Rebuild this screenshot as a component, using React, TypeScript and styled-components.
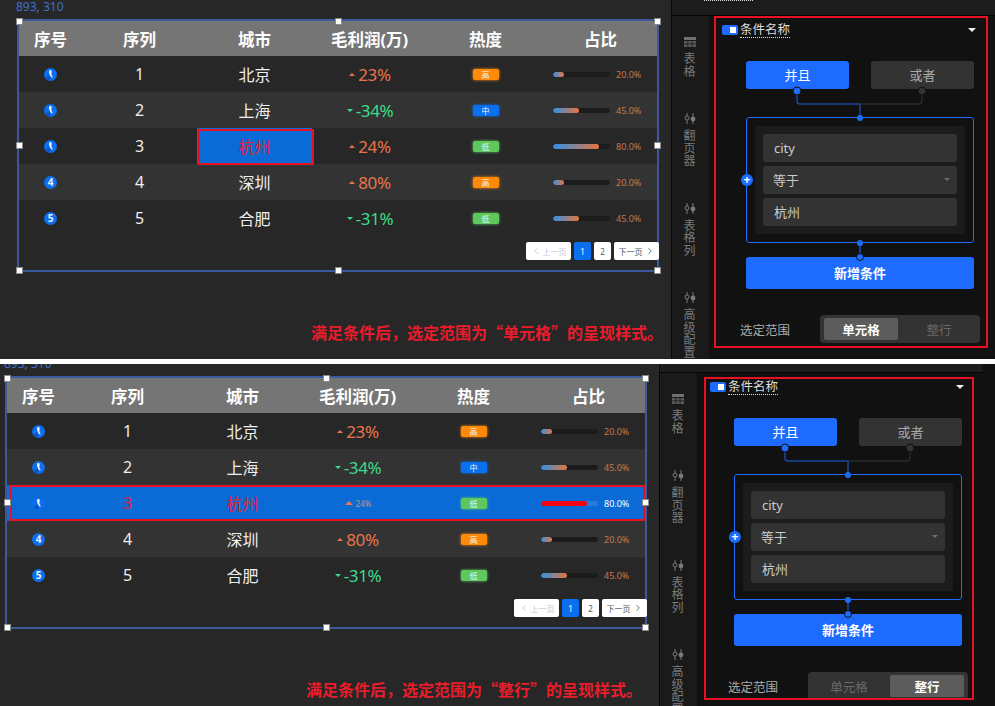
import React from "react";
import styled, { createGlobalStyle } from "styled-components";
import { ChevronLeft, ChevronRight } from "lucide-react";

const GlobalStyle = createGlobalStyle`
  html, body {
    margin: 0;
    padding: 0;
    background: #fff;
  }
  body {
    font-family: "Noto Sans", "Noto Sans CJK SC", sans-serif;
  }
`;

const Page = styled.div`
  width: 995px;
  height: 706px;
  overflow: hidden;
  display: flex;
  flex-direction: column;
  gap: 5px;
`;

const Shot = styled.section<{ $height: number }>`
  height: ${(p) => p.$height}px;
  overflow: hidden;
  background: #111;
  flex: none;
`;

const Stage = styled.div<{ $dx: number; $dy: number }>`
  display: flex;
  width: 995px;
  height: 365px;
  margin-left: ${(p) => p.$dx}px;
  margin-top: ${(p) => p.$dy}px;
`;

const Canvas = styled.div<{ $captionRight: number }>`
  width: 671px;
  flex: none;
  box-sizing: border-box;
  background: #272727;
  padding: 19px ${(p) => p.$captionRight}px 0 17px;
  display: flex;
  flex-direction: column;
`;

const Frame = styled.div`
  position: relative;
  box-sizing: border-box;
  width: 642px;
  height: 253px;
  border: 2px solid #3b5a9e;
`;

const SizeLabel = styled.div`
  position: absolute;
  left: -3px;
  top: -22px;
  font-size: 12px;
  line-height: 16px;
  color: #3f6fcf;
`;

const Handle = styled.i<{ $x: number; $y: number }>`
  position: absolute;
  z-index: 3;
  left: ${(p) => p.$x}%;
  top: ${(p) => p.$y}%;
  width: 5px;
  height: 5px;
  margin: -3.5px 0 0 -3.5px;
  background: #fff;
  border: 1px solid #8a8a8a;
`;

const Grid = styled.div`
  display: grid;
  grid-template-columns: 63px 115px 115px 115px 117px 113px;
  align-items: stretch;
`;

const HeadRow = styled(Grid)`
  height: 35px;
  background: #757575;
`;

const HeadCell = styled.div`
  display: flex;
  align-items: center;
  justify-content: center;
  color: #fff;
  font-size: 16.5px;
  font-weight: 700;
`;

const Row = styled(Grid)<{ $even: boolean; $picked: boolean; $lift: boolean }>`
  position: relative;
  ${(p) => p.$lift && "z-index: 2;"}
  height: 36px;
  background: ${(p) => (p.$picked ? "#0a6bd6" : p.$even ? "#333333" : "#272727")};
  ${(p) =>
    p.$picked &&
    `
    &::after {
      content: "";
      position: absolute;
      inset: 0 0 0 3px;
      border: 2px solid #e81123;
      pointer-events: none;
    }
  `}
`;

const Cell = styled.div<{ $picked?: boolean; $red?: boolean }>`
  position: relative;
  display: flex;
  align-items: center;
  justify-content: center;
  font-size: 16px;
  color: ${(p) => (p.$red ? "#e3203a" : "#eeeeee")};
  ${(p) => p.$picked && "background: #0a6bd6;"}
  ${(p) =>
    p.$picked &&
    `
    &::after {
      content: "";
      position: absolute;
      inset: 1px -2px -1px 1px;
      border: 2px solid #e81123;
    }
  `}
`;

const RankBadge = styled.span`
  position: relative;
  width: 13px;
  height: 13px;
  border-radius: 50%;
  background: #0c6ff0;
  color: #e6f0ff;
  font-size: 10px;
  font-weight: 700;
  line-height: 13px;
  text-align: center;
  display: block;
`;

const Trend = styled.div<{ $tone: "up" | "down" }>`
  display: flex;
  align-items: center;
  justify-content: center;
  gap: 3px;
  padding-left: 1px;
  font-size: 17px;
  letter-spacing: -0.4px;
  color: ${(p) => (p.$tone === "up" ? "#e8754c" : "#3ddc8a")};
`;

const TinyTrend = styled(Trend)`
  font-size: 8px;
  letter-spacing: 0;
  color: #d98a78;
`;

const Tri = styled.i<{ $down: boolean; $size: number }>`
  width: 0;
  height: 0;
  border-left: ${(p) => p.$size}px solid transparent;
  border-right: ${(p) => p.$size}px solid transparent;
  ${(p) =>
    p.$down
      ? `border-top: ${p.$size}px solid #3ddc8a;`
      : `border-bottom: ${p.$size}px solid #e8754c;`}
`;

const levelColors = {
  高: "#ff8a0a",
  中: "#0a70f0",
  低: "#5ec85e",
};

const Level = styled.span<{ $level: keyof typeof levelColors }>`
  width: 26px;
  height: 11px;
  border-radius: 2px;
  background: ${(p) => levelColors[p.$level]};
  box-shadow: 0 0 3px ${(p) => levelColors[p.$level]};
  color: #f4f4f4;
  font-size: 8px;
  line-height: 11px;
  text-align: center;
`;

const Ratio = styled.div`
  display: flex;
  align-items: center;
  padding-left: 9px;
  gap: 6px;
`;

const Track = styled.div<{ $picked: boolean }>`
  width: 57px;
  height: 5px;
  border-radius: 3px;
  background: ${(p) => (p.$picked ? "#2a78d8" : "#1b1b1b")};
  overflow: hidden;
`;

const Fill = styled.div<{ $picked: boolean }>`
  height: 100%;
  border-radius: 3px;
  background: ${(p) => (p.$picked ? "#f5000f" : "linear-gradient(90deg, #2f90ea, #e8743c)")};
`;

const RatioText = styled.span<{ $picked: boolean }>`
  font-size: 9px;
  color: ${(p) => (p.$picked ? "#ffffff" : "#c8794a")};
`;

const Pager = styled.div`
  display: flex;
  justify-content: flex-end;
  gap: 3px;
  margin: 6px -2px 0 0;
`;

const PageButton = styled.div<{ $active?: boolean; $muted?: boolean; $wide?: boolean }>`
  width: ${(p) => (p.$wide ? 45 : 17)}px;
  height: 18px;
  display: flex;
  align-items: center;
  justify-content: center;
  gap: 2px;
  border-radius: 2px;
  font-size: 8px;
  background: ${(p) => (p.$active ? "#0a70f0" : "#fff")};
  color: ${(p) => (p.$active ? "#fff" : p.$muted ? "#c4c8d0" : "#555")};
`;

const Caption = styled.div`
  margin-top: 49px;
  align-self: flex-end;
  font-family: "Noto Sans CJK SC", sans-serif;
  font-size: 16px;
  line-height: 22px;
  font-weight: 700;
  white-space: nowrap;
  color: #ea1c2b;
`;

const Side = styled.div`
  width: 324px;
  flex: none;
  box-sizing: border-box;
  border-left: 1px solid #080808;
  display: flex;
  flex-direction: column;
  background: #1a1a1a;
`;

const TopBar = styled.div`
  height: 15px;
  flex: none;
  border-bottom: 1px solid #050505;
  background: #1c1c1c;
`;

const Trace = styled.div`
  width: 49px;
  margin-left: 32px;
  border-top: 1px dotted #ddd;
`;

const SideBody = styled.div`
  display: flex;
  flex: 1;
`;

const Tabs = styled.nav`
  width: 37px;
  flex: none;
  box-sizing: border-box;
  padding: 21px 2px 0 0;
  display: flex;
  flex-direction: column;
  align-items: center;
  gap: 35px;
`;

const Tab = styled.div`
  display: flex;
  flex-direction: column;
  align-items: center;
  gap: 6px;
`;

const TabText = styled.div`
  width: 12px;
  font-size: 12px;
  line-height: 12.5px;
  color: #7a7a7a;
  text-align: center;
`;

const Panel = styled.div`
  position: relative;
  flex: 1;
  box-sizing: border-box;
  padding: 6px 15px 0 13px;
  background: #111111;
`;

const RedBox = styled.div<{ $left: number; $top: number; $right: number; $bottom: number }>`
  position: absolute;
  z-index: 4;
  left: ${(p) => p.$left}px;
  top: ${(p) => p.$top}px;
  width: ${(p) => p.$right - p.$left}px;
  height: ${(p) => p.$bottom - p.$top}px;
  box-sizing: border-box;
  border: 2px solid #e81123;
  pointer-events: none;
`;

const PanelHead = styled.div`
  height: 16px;
  display: flex;
  align-items: center;
  padding-right: 4px;
`;

const Toggle = styled.span`
  width: 16px;
  height: 10px;
  border-radius: 2px;
  background: #1e6cff;
  position: relative;
  margin-right: 2px;
  &::after {
    content: "";
    position: absolute;
    right: 2px;
    top: 2px;
    width: 6px;
    height: 6px;
    background: #fff;
  }
`;

const PanelTitle = styled.span`
  font-size: 12.5px;
  line-height: 15px;
  color: #dddddd;
  border-bottom: 1px dotted #ddd;
  flex: 1 0 auto;
  max-width: 50px;
`;

const Caret = styled.i<{ $color: string; $w: number }>`
  margin-left: auto;
  width: 0;
  height: 0;
  border-left: ${(p) => p.$w}px solid transparent;
  border-right: ${(p) => p.$w}px solid transparent;
  border-top: ${(p) => p.$w}px solid ${(p) => p.$color};
`;

const Logic = styled.div`
  margin: 23px 6px 0 24px;
`;

const ModeRow = styled.div`
  display: flex;
  justify-content: space-between;
`;

const ModeButton = styled.div<{ $on: boolean }>`
  width: 103px;
  height: 28px;
  box-sizing: border-box;
  padding-bottom: 2px;
  border-radius: 3px;
  display: flex;
  align-items: center;
  justify-content: center;
  font-size: 13px;
  background: ${(p) => (p.$on ? "#1e6cff" : "#333333")};
  color: ${(p) => (p.$on ? "#ffffff" : "#aaaaaa")};
`;

const Wire = styled.svg`
  display: block;
  position: relative;
  z-index: 2;
  overflow: visible;
`;

const RuleBox = styled.div`
  position: relative;
  height: 126px;
  box-sizing: border-box;
  padding: 8px;
  border: 1px solid #1e6cff;
  border-radius: 3px;
`;

const AddDot = styled.span`
  position: absolute;
  left: -6px;
  top: 50%;
  width: 12px;
  height: 12px;
  margin-top: -6px;
  border-radius: 50%;
  background: #1e6cff;
  color: #fff;
  font-size: 12px;
  font-weight: 700;
  line-height: 11px;
  text-align: center;
`;

const RuleInner = styled.div`
  height: 108px;
  box-sizing: border-box;
  padding: 8px;
  border-radius: 3px;
  background: #1c1c1c;
  display: flex;
  flex-direction: column;
  gap: 4px;
`;

const Field = styled.div<{ $pad?: number; $lift?: boolean }>`
  height: 28px;
  flex: none;
  box-sizing: border-box;
  border-radius: 3px;
  background: #333333;
  color: #cccccc;
  font-size: 13px;
  display: flex;
  align-items: center;
  padding: 0 7px ${(p) => (p.$lift ? 2 : 0)}px ${(p) => p.$pad ?? 11}px;
`;

const AddButton = styled.div`
  height: 32px;
  box-sizing: border-box;
  padding-bottom: 2px;
  border-radius: 3px;
  background: #1e6cff;
  color: #fff;
  font-size: 13px;
  font-weight: 700;
  display: flex;
  align-items: center;
  justify-content: center;
`;

const RangeRow = styled.div`
  margin: 26px 0 0 18px;
  display: flex;
  align-items: center;
  justify-content: space-between;
`;

const RangeLabel = styled.span`
  font-size: 12.5px;
  color: #aaaaaa;
`;

const Segment = styled.div`
  width: 160px;
  height: 28px;
  box-sizing: border-box;
  padding: 3px 4px;
  border-radius: 4px;
  background: #333333;
  display: grid;
  grid-template-columns: 74px 74px;
  gap: 4px;
`;

const SegmentItem = styled.div<{ $on: boolean }>`
  border-radius: 2px;
  display: flex;
  align-items: center;
  justify-content: center;
  font-size: 12.5px;
  font-weight: ${(p) => (p.$on ? 700 : 400)};
  color: ${(p) => (p.$on ? "#ffffff" : "#6a6a6a")};
  background: ${(p) => (p.$on ? "#5c5c5c" : "transparent")};
`;

type RowData = {
  rank: number;
  seq: number;
  city: string;
  profit: number;
  level: keyof typeof levelColors;
  ratio: number;
};

const rows: RowData[] = [
  { rank: 1, seq: 1, city: "北京", profit: 23, level: "高", ratio: 20 },
  { rank: 2, seq: 2, city: "上海", profit: -34, level: "中", ratio: 45 },
  { rank: 3, seq: 3, city: "杭州", profit: 24, level: "低", ratio: 80 },
  { rank: 4, seq: 4, city: "深圳", profit: 80, level: "高", ratio: 20 },
  { rank: 5, seq: 5, city: "合肥", profit: -31, level: "低", ratio: 45 },
];

const heads = ["序号", "序列", "城市", "毛利润(万)", "热度", "占比"];

const handles = [
  [0, 0],
  [50, 0],
  [100, 0],
  [0, 50],
  [100, 50],
  [0, 100],
  [50, 100],
  [100, 100],
];

function TableIcon() {
  return (
    <svg width="12" height="10" viewBox="0 0 12 10">
      <rect width="12" height="3" fill="#707070" />
      <path d="M0 4h3.5v2.5H0zM4.3 4h3.4v2.5H4.3zM8.5 4H12v2.5H8.5zM0 7.3h3.5V10H0zM4.3 7.3h3.4V10H4.3zM8.5 7.3H12V10H8.5z" fill="#5a5a5a" />
    </svg>
  );
}

function SliderIcon() {
  return (
    <svg width="12" height="11" viewBox="0 0 12 11" fill="none">
      <circle cx="3" cy="5" r="2" stroke="#7a7a7a" />
      <path d="M3 0v3M3 7v4M9 0v11" stroke="#7a7a7a" />
      <circle cx="9" cy="6" r="2.4" fill="#7a7a7a" />
    </svg>
  );
}

function RankMark({ rank }: { rank: number }) {
  if (rank > 3) {
    return <RankBadge>{rank}</RankBadge>;
  }
  return (
    <RankBadge>
      <svg width="13" height="13" viewBox="0 0 13 13" style={{ display: "block" }}>
        <path d="M1.5 9.5A6 6 0 0 0 6.2 12.5V7z" fill="#0a55c0" />
        <path d="M5.2 2.4c1.2-.8 2.6-.2 2.5 1.1L7.3 6.4c.8 1 1.3 2 1.2 3-1 .1-1.9-.6-2.3-1.6L5 4.8z" fill="#eef4ff" />
      </svg>
    </RankBadge>
  );
}

function TableRow({ row, mode }: { row: RowData; mode: "cell" | "row" }) {
  const hit = row.city === "杭州";
  const rowHit = hit && mode === "row";
  const down = row.profit < 0;
  const TrendBox = rowHit ? TinyTrend : Trend;
  return (
    <Row $even={row.rank % 2 === 0} $picked={rowHit} $lift={hit}>
      <Cell>
        <RankMark rank={row.rank} />
      </Cell>
      <Cell $red={rowHit}>{row.seq}</Cell>
      <Cell $picked={hit && mode === "cell"} $red={hit}>
        {row.city}
      </Cell>
      <TrendBox $tone={down ? "down" : "up"}>
        <Tri $down={down} $size={rowHit ? 4.5 : 3} />
        {row.profit}%
      </TrendBox>
      <Cell>
        <Level $level={row.level}>{row.level}</Level>
      </Cell>
      <Ratio>
        <Track $picked={rowHit}>
          <Fill $picked={rowHit} style={{ width: `${row.ratio}%` }} />
        </Track>
        <RatioText $picked={rowHit}>{row.ratio.toFixed(1)}%</RatioText>
      </Ratio>
    </Row>
  );
}

function ConditionPanel({ mode }: { mode: "cell" | "row" }) {
  return (
    <>
      <PanelHead>
        <Toggle />
        <PanelTitle>条件名称</PanelTitle>
        <Caret $color="#eeeeee" $w={4} />
      </PanelHead>
      <Logic>
        <ModeRow>
          <ModeButton $on>并且</ModeButton>
          <ModeButton $on={false}>或者</ModeButton>
        </ModeRow>
        <Wire width="228" height="28" viewBox="0 0 228 28">
          <path d="M176 2V12Q176 15 173 15H114" stroke="#2a2a2a" strokeWidth="1.5" fill="none" />
          <path d="M51 2V12Q51 15 54 15H113Q114 15 114 16V29" stroke="#1a47a0" strokeWidth="1.5" fill="none" />
          <circle cx="51" cy="2" r="4" fill="#1e6cff" stroke="#111" />
          <circle cx="176" cy="2" r="4" fill="#333" stroke="#111" />
          <circle cx="114" cy="29" r="3" fill="#1e6cff" />
        </Wire>
        <RuleBox>
          <AddDot>+</AddDot>
          <RuleInner>
            <Field>city</Field>
            <Field $pad={10} $lift>
              等于
              <Caret $color="#6e6e6e" $w={3.5} />
            </Field>
            <Field $lift>杭州</Field>
          </RuleInner>
        </RuleBox>
        <Wire width="228" height="14" viewBox="0 0 228 14">
          <path d="M114 0V14" stroke="#1e6cff" strokeWidth="1" />
          <circle cx="114" cy="0" r="3" fill="#1e6cff" />
          <circle cx="114" cy="14" r="3.5" fill="#1e6cff" stroke="#0d0d0d" />
        </Wire>
        <AddButton>新增条件</AddButton>
      </Logic>
      <RangeRow>
        <RangeLabel>选定范围</RangeLabel>
        <Segment>
          <SegmentItem $on={mode === "cell"}>单元格</SegmentItem>
          <SegmentItem $on={mode === "row"}>整行</SegmentItem>
        </Segment>
      </RangeRow>
    </>
  );
}

type ScreenProps = {
  mode: "cell" | "row";
  caption: string;
  captionRight: number;
  dx: number;
  dy: number;
  height: number;
  box: { left: number; top: number; right: number; bottom: number };
};

function Screen({ mode, caption, captionRight, dx, dy, height, box }: ScreenProps) {
  return (
    <Shot $height={height}>
      <Stage $dx={dx} $dy={dy}>
        <Canvas $captionRight={captionRight}>
          <Frame>
            <SizeLabel>893, 310</SizeLabel>
            {handles.map(([x, y]) => (
              <Handle key={`${x}-${y}`} $x={x} $y={y} />
            ))}
            <HeadRow>
              {heads.map((h) => (
                <HeadCell key={h}>{h}</HeadCell>
              ))}
            </HeadRow>
            {rows.map((row) => (
              <TableRow key={row.rank} row={row} mode={mode} />
            ))}
            <Pager>
              <PageButton $wide $muted>
                <ChevronLeft size={10} />
                上一页
              </PageButton>
              <PageButton $active>1</PageButton>
              <PageButton>2</PageButton>
              <PageButton $wide>
                下一页
                <ChevronRight size={10} />
              </PageButton>
            </Pager>
          </Frame>
          <Caption>{caption}</Caption>
        </Canvas>
        <Side>
          <TopBar>
            <Trace />
          </TopBar>
          <SideBody>
            <Tabs>
              <Tab>
                <TableIcon />
                <TabText>表格</TabText>
              </Tab>
              <Tab>
                <SliderIcon />
                <TabText>翻页器</TabText>
              </Tab>
              <Tab>
                <SliderIcon />
                <TabText>表格列</TabText>
              </Tab>
              <Tab>
                <SliderIcon />
                <TabText>高级配置</TabText>
              </Tab>
            </Tabs>
            <Panel>
              <RedBox $left={box.left} $top={box.top} $right={box.right} $bottom={box.bottom} />
              <ConditionPanel mode={mode} />
            </Panel>
          </SideBody>
        </Side>
      </Stage>
    </Shot>
  );
}

export default function App() {
  return (
    <>
      <GlobalStyle />
      <Page>
        <Screen
          mode="cell"
          caption="满足条件后，选定范围为“单元格”的呈现样式。"
          captionRight={8}
          dx={0}
          dy={0}
          height={359}
          box={{ left: 5, top: 0, right: 279, bottom: 332 }}
        />
        <Screen
          mode="row"
          caption="满足条件后，选定范围为“整行”的呈现样式。"
          captionRight={17}
          dx={-12}
          dy={-7}
          height={342}
          box={{ left: 7, top: 4, right: 277, bottom: 327 }}
        />
      </Page>
    </>
  );
}
